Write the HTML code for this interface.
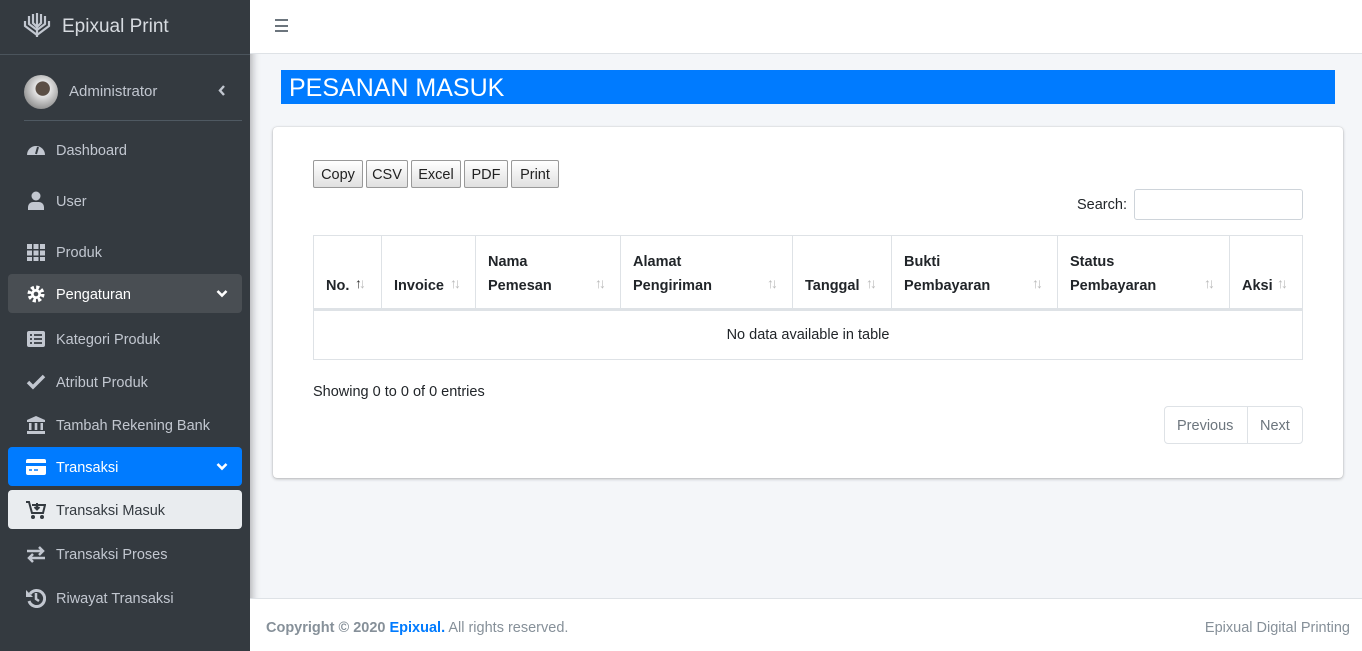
<!DOCTYPE html>
<html><head><meta charset="utf-8"><style>
*{box-sizing:border-box;margin:0;padding:0}
body{width:1362px;height:651px;overflow:hidden;font-family:"Liberation Sans",sans-serif;font-size:14.5px;color:#212529;background:#f4f6f9;position:relative}
.abs{position:absolute}
#sb{left:0;top:0;width:250px;height:651px;background:#343a40;box-shadow:2px 0 8px rgba(0,0,0,.3)}
.nav{position:absolute;left:8px;width:234px;height:39px;border-radius:4px;color:#c2c7d0;display:flex;align-items:center;padding-left:48px;padding-top:2px;font-size:14.5px}
.ic{position:absolute;left:18px;top:10px;width:20px;height:20px}
.chev{position:absolute;right:14px;top:15px}
.btn{position:absolute;top:160px;height:28px;border:1px solid #999;background:linear-gradient(#fff,#e0e0e0);font-size:14.5px;display:flex;align-items:center;justify-content:center;color:#222;border-radius:2px;padding-top:2px}
.col{position:absolute;top:235px;height:74px;border-right:1px solid #dee2e6}
.h{position:absolute;font-weight:bold;font-size:14.5px;line-height:24px}
.ar{position:absolute;top:275px;color:#bbb;font-size:14px;letter-spacing:-3px}
</style></head><body>
<div id="sb" class="abs">
 <div class="abs" style="left:0;top:54px;width:250px;height:1px;background:#4b545c"></div>
 <svg class="abs" style="left:23px;top:11px" width="28" height="28" viewBox="0 0 28 28" fill="none" stroke="#c2c7d0" stroke-width="2.2"><path d="M14 2v24M10 3v9l4 4M18 3v9l-4 4M6 5v8l8 6M22 5v8l-8 6M2 10v5l12 9M26 10v5l-12 9"/></svg>
 <div class="abs" style="left:62px;top:16px;font-size:19px;color:#d7dbe0">Epixual Print</div>
 <div class="abs" style="left:24px;top:75px;width:34px;height:34px;border-radius:50%;background:radial-gradient(circle at 55% 40%,#5b4f45 0 25%,#e5e5e5 27%,#999 70%,#555)"></div>
 <div class="abs" style="left:69px;top:83px;font-size:15px;color:#c2c7d0">Administrator</div>
 <svg class="abs" style="left:218px;top:85px" width="8" height="11" viewBox="0 0 8 11"><path d="M6 1L2 5.5 6 10" stroke="#c2c7d0" stroke-width="2.4" fill="none"/></svg>
 <div class="abs" style="left:24px;top:120px;width:218px;height:1px;background:#4f5962"></div>

 <div class="nav" style="top:130px">Dashboard<svg class="ic" viewBox="0 0 20 20"><path d="M1 15a9 9 0 0 1 18 0z" fill="#c2c7d0"/><path d="M10 14l2-7" stroke="#343a40" stroke-width="2"/></svg></div>
 <div class="nav" style="top:181px">User<svg class="ic" viewBox="0 0 20 20" fill="#c2c7d0"><circle cx="10" cy="5" r="4.5"/><path d="M2 19v-3a5 5 0 0 1 5-5h6a5 5 0 0 1 5 5v3z"/></svg></div>
 <div class="nav" style="top:232px">Produk<svg class="ic" viewBox="0 0 20 20" fill="#c2c7d0"><path d="M1 2h5v5H1zM7.5 2h5v5h-5zM14 2h5v5h-5zM1 8.5h5v5H1zM7.5 8.5h5v5h-5zM14 8.5h5v5h-5zM1 15h5v4H1zM7.5 15h5v4h-5zM14 15h5v4h-5z"/></svg></div>
 <div class="nav" style="top:274px;background:#494e53;color:#fff">Pengaturan<svg class="ic" viewBox="0 0 20 20"><circle cx="10" cy="10" r="6.5" fill="none" stroke="#fff" stroke-width="4" stroke-dasharray="3 2.1"/><circle cx="10" cy="10" r="5" fill="#fff"/><circle cx="10" cy="10" r="2.3" fill="#494e53"/></svg><svg class="chev" width="12" height="9" viewBox="0 0 12 9"><path d="M1.5 2l4.5 4.5L10.5 2" stroke="#fff" stroke-width="2.6" fill="none"/></svg></div>
 <div class="nav" style="top:319px">Kategori Produk<svg class="ic" viewBox="0 0 20 20"><rect x="1" y="2" width="18" height="16" rx="2" fill="#c2c7d0"/><path d="M4 6h2M8 6h8M4 10h2M8 10h8M4 14h2M8 14h8" stroke="#343a40" stroke-width="1.8"/></svg></div>
 <div class="nav" style="top:362px">Atribut Produk<svg class="ic" viewBox="0 0 20 20"><path d="M2 10l5 5L18 4" stroke="#c2c7d0" stroke-width="3.5" fill="none"/></svg></div>
 <div class="nav" style="top:405px">Tambah Rekening Bank<svg class="ic" viewBox="0 0 20 20" fill="#c2c7d0"><path d="M10 1l9 4v2H1V5zM3 8h2.5v7H3zM8.7 8h2.6v7H8.7zM14.5 8H17v7h-2.5zM1 16h18v3H1z"/></svg></div>
 <div class="nav" style="top:447px;background:#007bff;color:#fff">Transaksi<svg class="ic" viewBox="0 0 20 20"><rect x="0" y="2" width="20" height="16" rx="2" fill="#fff"/><path d="M0 6h20v3H0z" fill="#007bff"/><path d="M3 13h3M8 13h4" stroke="#007bff" stroke-width="1.6"/></svg><svg class="chev" width="12" height="9" viewBox="0 0 12 9"><path d="M1.5 2l4.5 4.5L10.5 2" stroke="#fff" stroke-width="2.6" fill="none"/></svg></div>
 <div class="nav" style="top:490px;background:#e9ecef;color:#343a40">Transaksi Masuk<svg class="ic" viewBox="0 0 20 20" fill="#343a40"><path d="M0 2h3l3 11h11l2-8H6" stroke="#343a40" stroke-width="2" fill="none"/><path d="M11 3v6M8.5 7l2.5 2.5L13.5 7" stroke="#343a40" stroke-width="2" fill="none"/><circle cx="7" cy="17" r="2"/><circle cx="16" cy="17" r="2"/></svg></div>
 <div class="nav" style="top:534px">Transaksi Proses<svg class="ic" viewBox="0 0 20 20"><path d="M1 7h15M13 3l4 4-4 4M19 14H4M7 10l-4 4 4 4" stroke="#c2c7d0" stroke-width="2.5" fill="none"/></svg></div>
 <div class="nav" style="top:578px">Riwayat Transaksi<svg class="ic" viewBox="0 0 20 20"><path d="M4 6a8 8 0 1 1-1 7" stroke="#c2c7d0" stroke-width="3" fill="none"/><path d="M0 2v7h7z" fill="#c2c7d0"/><path d="M10 5v6l3 2" stroke="#c2c7d0" stroke-width="2.5" fill="none"/></svg></div>
</div>

<div class="abs" style="left:250px;top:0;width:1112px;height:54px;background:#fff;border-bottom:1px solid #dee2e6"></div>
<div class="abs" style="left:275px;top:19px;width:13px;height:13px;border-top:2px solid #6c757d;border-bottom:2px solid #6c757d"><div style="margin-top:3.5px;height:2px;background:#6c757d"></div></div>

<div class="abs" style="left:281px;top:70px;width:1054px;height:34px;background:#007bff;color:#fff;font-size:25px;padding-left:8px;line-height:37px">PESANAN MASUK</div>

<div class="abs" style="left:273px;top:127px;width:1070px;height:351px;background:#fff;border-radius:4px;box-shadow:0 0 1px rgba(0,0,0,.2),0 1px 3px rgba(0,0,0,.25)"></div>
<div class="btn" style="left:313px;width:50px">Copy</div>
<div class="btn" style="left:366px;width:42px">CSV</div>
<div class="btn" style="left:411px;width:50px">Excel</div>
<div class="btn" style="left:464px;width:44px">PDF</div>
<div class="btn" style="left:511px;width:48px">Print</div>
<div class="abs" style="left:1077px;top:197px">Search:</div>
<div class="abs" style="left:1134px;top:189px;width:169px;height:31px;border:1px solid #ced4da;border-radius:3px"></div>

<div class="abs" style="left:313px;top:235px;width:990px;height:125px;border:1px solid #dee2e6"></div>
<div class="abs" style="left:313px;top:308px;width:990px;height:3px;background:#dee2e6"></div>
<div class="col" style="left:313px;width:69px"></div>
<div class="col" style="left:382px;width:94px"></div>
<div class="col" style="left:476px;width:145px"></div>
<div class="col" style="left:621px;width:172px"></div>
<div class="col" style="left:793px;width:99px"></div>
<div class="col" style="left:892px;width:166px"></div>
<div class="col" style="left:1058px;width:172px"></div>
<div class="h" style="left:326px;top:274px">No.</div><div class="ar" style="left:355px;color:#333">↑<span style="color:#bbb">↓</span></div>
<div class="h" style="left:394px;top:274px">Invoice</div><div class="ar" style="left:450px">↑↓</div>
<div class="h" style="left:488px;top:250px">Nama<br>Pemesan</div><div class="ar" style="left:595px">↑↓</div>
<div class="h" style="left:633px;top:250px">Alamat<br>Pengiriman</div><div class="ar" style="left:767px">↑↓</div>
<div class="h" style="left:805px;top:274px">Tanggal</div><div class="ar" style="left:866px">↑↓</div>
<div class="h" style="left:904px;top:250px">Bukti<br>Pembayaran</div><div class="ar" style="left:1032px">↑↓</div>
<div class="h" style="left:1070px;top:250px">Status<br>Pembayaran</div><div class="ar" style="left:1204px">↑↓</div>
<div class="h" style="left:1242px;top:274px">Aksi</div><div class="ar" style="left:1277px">↑↓</div>
<div class="abs" style="left:313px;top:327px;width:990px;text-align:center">No data available in table</div>

<div class="abs" style="left:313px;top:384px">Showing 0 to 0 of 0 entries</div>
<div class="abs" style="left:1164px;top:406px;width:139px;height:38px;border:1px solid #dee2e6;border-radius:4px;color:#6c757d">
 <span class="abs" style="left:12px;top:11px">Previous</span>
 <div class="abs" style="left:82px;top:0;width:1px;height:36px;background:#dee2e6"></div>
 <span class="abs" style="left:95px;top:11px">Next</span>
</div>

<div class="abs" style="left:250px;top:598px;width:1112px;height:53px;background:#fff;border-top:1px solid #dee2e6"></div>
<div class="abs" style="left:266px;top:620px;color:#869099"><b>Copyright © 2020 <span style="color:#007bff">Epixual.</span></b> All rights reserved.</div>
<div class="abs" style="right:12px;top:620px;color:#869099">Epixual Digital Printing</div>
</body></html>
